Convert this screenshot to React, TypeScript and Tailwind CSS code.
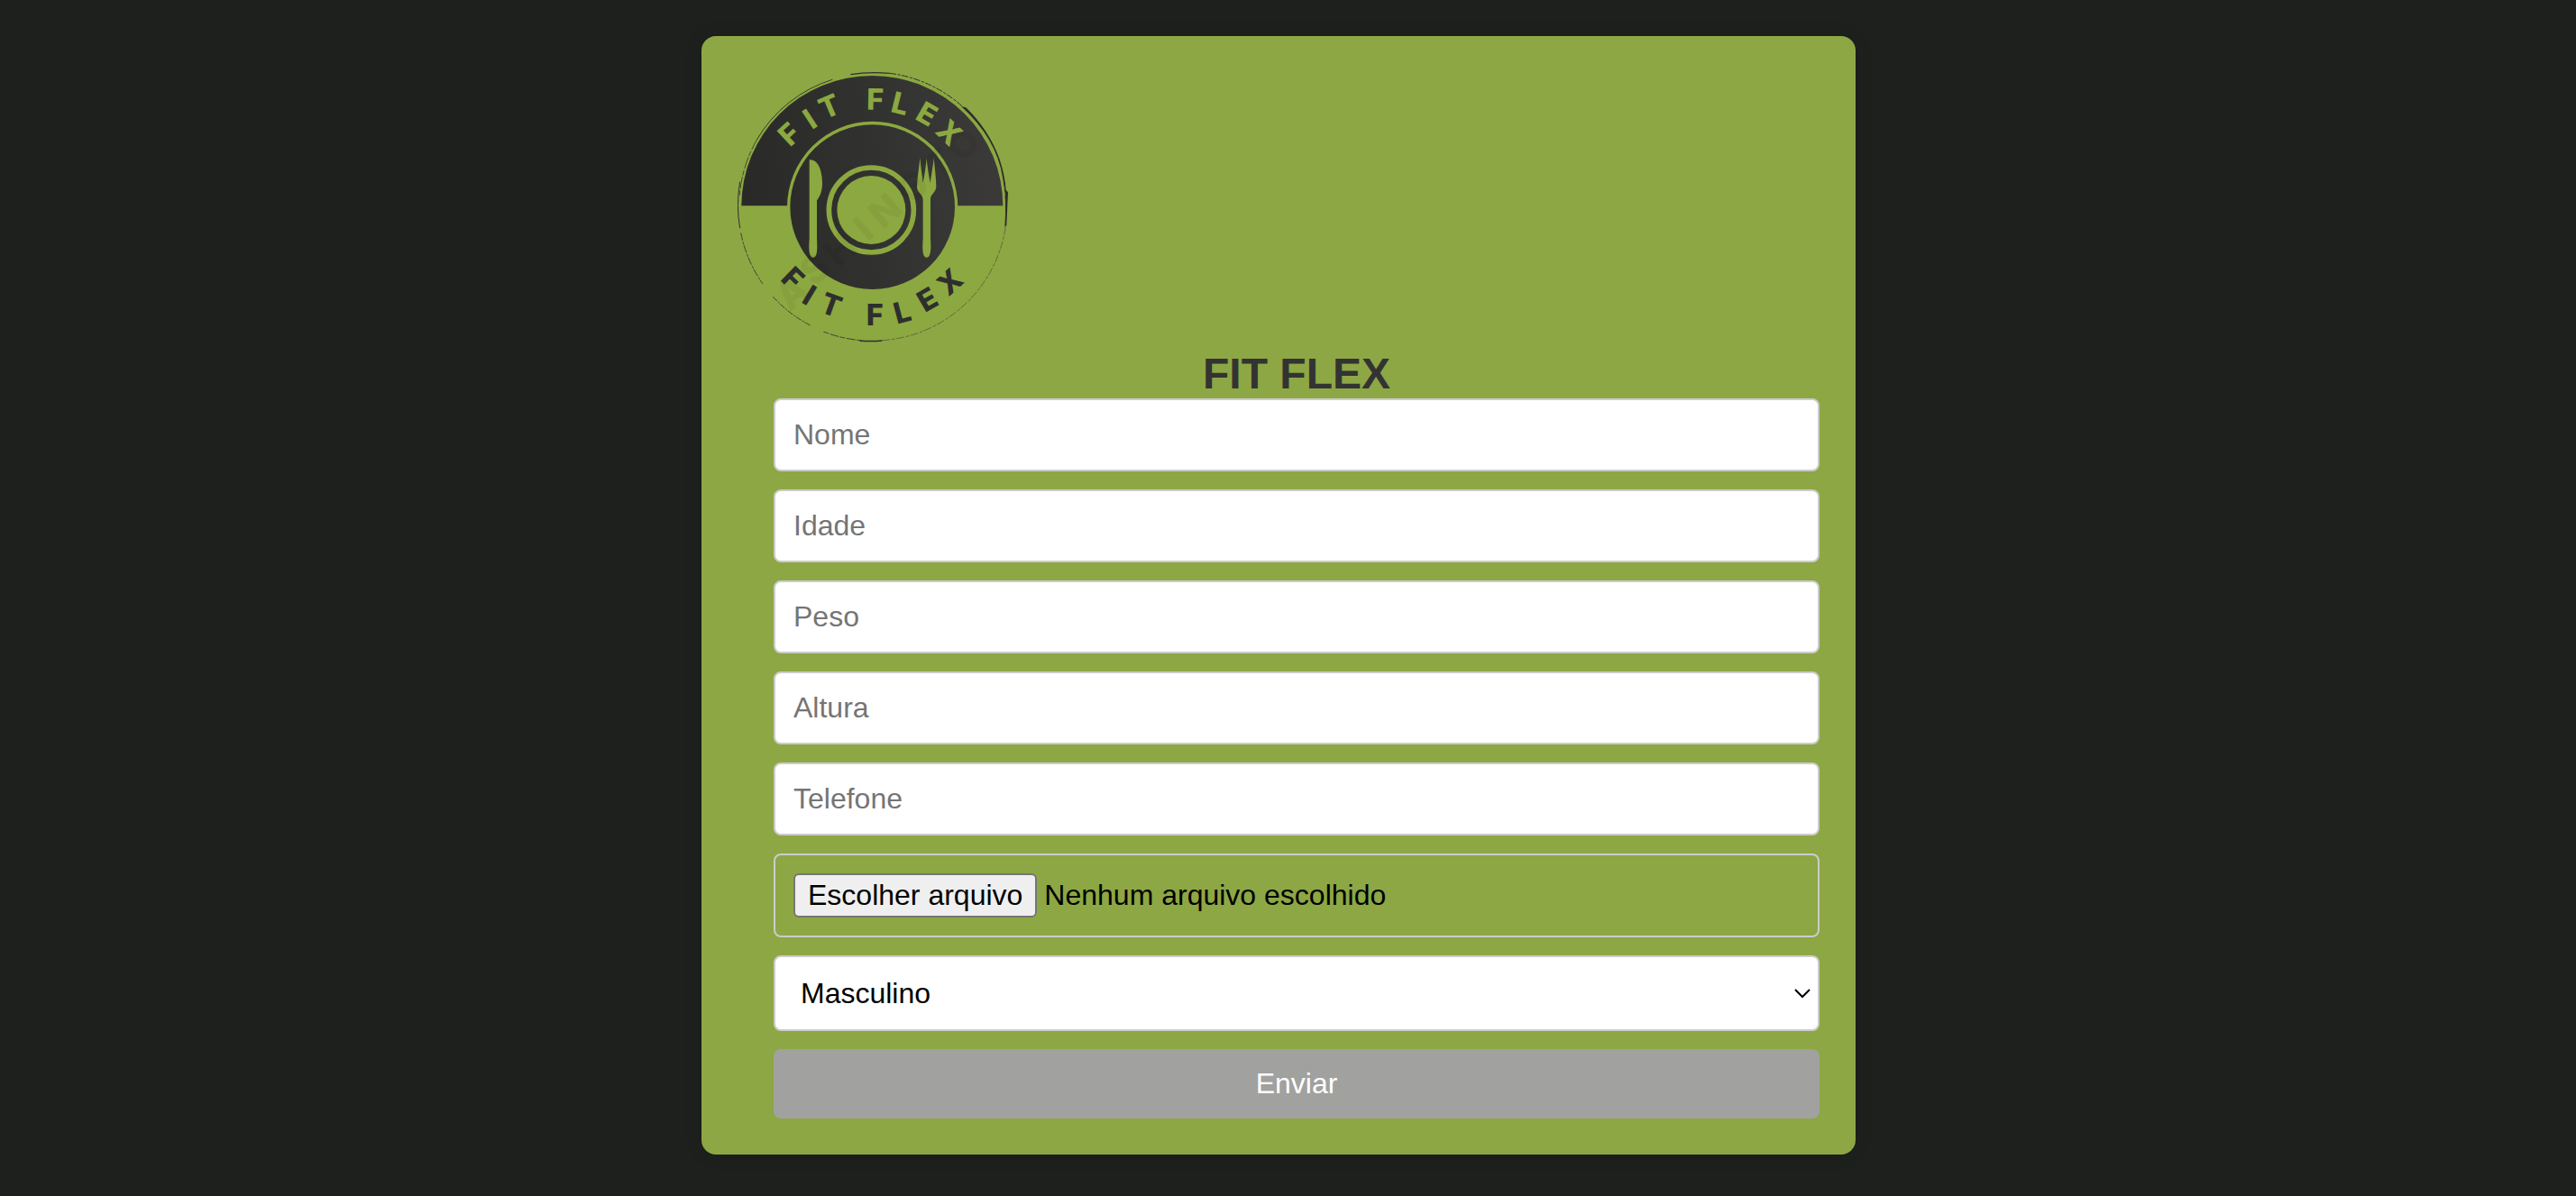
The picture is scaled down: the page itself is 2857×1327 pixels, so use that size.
import type { ReactNode } from "react";

const FONT = "font-[family-name:'Liberation_Sans',Arial,sans-serif]";

type Glyph = { c: string; x: number; y: number; r: number };

const topLetters: Glyph[] = [
  { c: "F", x: 346, y: 386, r: -43 },
  { c: "I", x: 414, y: 336, r: -33 },
  { c: "T", x: 479, y: 294, r: -23 },
  { c: "F", x: 632, y: 270, r: 1 },
  { c: "L", x: 715, y: 284, r: 14 },
  { c: "E", x: 804, y: 319, r: 30 },
  { c: "X", x: 879, y: 381, r: 44 },
];

const bottomLetters: Glyph[] = [
  { c: "F", x: 358, y: 866, r: 44 },
  { c: "I", x: 413, y: 922, r: 31 },
  { c: "T", x: 486, y: 955, r: 20 },
  { c: "F", x: 631, y: 987, r: 0 },
  { c: "L", x: 722, y: 978, r: -15 },
  { c: "E", x: 805, y: 937, r: -30 },
  { c: "X", x: 880, y: 878, r: -42 },
];

const watermark: Glyph[] = [
  { c: "A", x: 355, y: 915, r: -41 },
  { c: "S", x: 430, y: 835, r: -41 },
  { c: "H", x: 515, y: 768, r: -41 },
  { c: "I", x: 592, y: 700, r: -41 },
  { c: "N", x: 664, y: 640, r: -41 },
  { c: "G", x: 755, y: 560, r: -41 },
  { c: "T", x: 845, y: 485, r: -41 },
  { c: "O", x: 925, y: 420, r: -41 },
];

function Glyphs({ items, size, rise }: { items: Glyph[]; size: number; rise: number }) {
  return (
    <>
      {items.map((g, i) => (
        <text key={i} transform={`translate(${g.x} ${g.y}) rotate(${g.r})`} y={rise} fontSize={size} textAnchor="middle">
          {g.c}
        </text>
      ))}
    </>
  );
}

function Logo() {
  return (
    <svg
      viewBox="174 180 900 900"
      className="block size-[300px]"
      fontFamily="Inter, sans-serif"
      fontWeight={800}
      role="img"
      aria-label="Fit Flex"
    >
      <defs>
        <linearGradient id="ink" gradientUnits="userSpaceOnUse" x1="188" y1="640" x2="1057" y2="560">
          <stop offset="0" stopColor="#292a28" />
          <stop offset="0.5" stopColor="#31322f" />
          <stop offset="1" stopColor="#3b3a39" />
        </linearGradient>
      </defs>
      <circle cx="624" cy="630" r="443" fill="#8ca840" />
      {/* worn outer rim */}
      <g fill="none" stroke="#2f302d" strokeWidth="2.5">
        <path d="M490 205 A445 445 0 0 0 240 402" strokeWidth="3" />
        <path d="M240 402 A445 445 0 0 0 181 590" strokeDasharray="40 6 18 4" />
        <path d="M182 545 A445 445 0 0 0 182 700" strokeWidth="3" />
        <path d="M185 715 A445 445 0 0 0 258 885" strokeDasharray="26 5 9 3" />
        <path d="M292 928 A445 445 0 0 0 418 1024" strokeDasharray="20 4 7 3" />
        <path d="M460 1044 A445 445 0 0 0 585 1073" strokeDasharray="18 5 30 4" />
        <path d="M580 1074 Q618 1077 655 1074" strokeWidth="4" />
        <path d="M655 1073 A445 445 0 0 0 1066 695" strokeWidth="2" strokeDasharray="26 6 12 4" opacity="0.75" />
        <path d="M550 188 Q610 178 680 184" strokeWidth="3.5" />
        <path d="M680 184 A445 445 0 0 1 925 297" strokeDasharray="22 5 10 4" strokeWidth="3" />
      </g>
      <path d="M918 294 L934 298 Q1010 372 1046 470 Q1064 525 1067 572 L1074 580 L1069 690 L1063 696 Q1070 600 1056 530 Q1035 400 918 294 Z" fill="#2d2e2b" />
      <path d="M944 326 Q1040 430 1062 590" fill="none" stroke="#8ca840" strokeWidth="5" />

      <circle cx="622" cy="627" r="441" fill="#8ca840" />
      <path d="M187 625 A435 433 0 0 1 1057 625 Z" fill="url(#ink)" />
      <path d="M339 630 A284 286 0 0 1 907 630 Z" fill="#8ca840" />
      <circle cx="623" cy="629" r="274" fill="url(#ink)" />

      <circle cx="619" cy="639" r="141" fill="none" stroke="#8ca840" strokeWidth="17" />
      <circle cx="619" cy="639" r="114" fill="#8ca840" />
      <path
        d="M413 472 C444 470 456 512 456 550 C456 582 444 600 438 607 L438 735 C440 772 439 797 426 797 C412 797 410 772 413 735 Z"
        fill="#8ca840"
      />
      <path
        d="M781 465 C784 500 788 520 791 549 C796 520 800 500 803 465 C806 500 810 520 815 549 C819 520 823 500 827 465 C830 500 835 530 835 562 C833 582 817 586 816 603 L816 735 C819 772 816 797 803 797 C790 797 788 772 791 735 L791 603 C789 586 772 582 771 562 C772 530 778 500 781 465 Z"
        fill="#8ca840"
      />
      <g fill="#8ca840">
        <Glyphs items={topLetters} size={97} rise={35} />
      </g>
      <g fill="#2e2f2d">
        <Glyphs items={bottomLetters} size={97} rise={35} />
      </g>
      <g fill="#000000" opacity="0.05" aria-hidden="true">
        <Glyphs items={watermark} size={124} rise={45} />
      </g>
    </svg>
  );
}

function Field({ id, label, type = "text" }: { id: string; label: string; type?: string }) {
  return (
    <input
      id={id}
      name={id}
      type={type}
      aria-label={label}
      placeholder={label}
      className="block h-[81px] w-full rounded-lg border-2 border-[#cccccc] bg-white px-5 text-[32px] text-black placeholder:text-[#757575]"
    />
  );
}

function Card({ children }: { children: ReactNode }) {
  return (
    <main className="w-full max-w-[1280px] rounded-2xl bg-[#8da744] p-10 shadow-[0_0_20px_rgba(0,0,0,0.1)]">{children}</main>
  );
}

export default function App() {
  return (
    <div className={`flex min-h-screen items-start justify-center bg-[#1e201e] py-10 pr-[21px] ${FONT}`}>
      <Card>
        <Logo />
        <form className="mt-2 flex flex-col gap-5 pl-10" onSubmit={(e) => e.preventDefault()}>
          <h1 className="-mb-5 text-center text-5xl/[54px] font-bold text-[#333333]">FIT FLEX</h1>
          <Field id="nome" label="Nome" />
          <Field id="idade" label="Idade" />
          <Field id="peso" label="Peso" />
          <Field id="altura" label="Altura" />
          <Field id="telefone" label="Telefone" type="tel" />
          <label
            htmlFor="arquivo"
            className="flex w-full items-center gap-2 rounded-lg border-2 border-[#cccccc] px-5 py-5 text-[32px] leading-9 text-black"
          >
            <input id="arquivo" name="arquivo" type="file" className="sr-only" />
            <span className="rounded-md border-2 border-[#767676] bg-[#efefef] px-3.5 pt-1 pb-[5px]">Escolher arquivo</span>
            <span className="pb-0.5">Nenhum arquivo escolhido</span>
          </label>
          <div className="relative">
            <select
              id="sexo"
              name="sexo"
              aria-label="Sexo"
              className="block h-[84px] w-full appearance-none rounded-lg border-2 border-[#cccccc] bg-white pr-12 pl-7 text-[32px] text-black"
            >
              <option>Masculino</option>
              <option>Feminino</option>
            </select>
            <svg
              viewBox="0 0 18 12"
              className="pointer-events-none absolute inset-y-0 right-2.5 my-auto h-3 w-[18px]"
              fill="none"
              stroke="#000000"
              strokeWidth="2"
              aria-hidden="true"
            >
              <path d="M1 2 L9 10 L17 2" />
            </svg>
          </div>
          <button type="submit" className="h-[77px] w-full rounded-lg bg-[#a1a1a0] pb-0.5 text-[32px] text-white">
            Enviar
          </button>
        </form>
      </Card>
    </div>
  );
}
